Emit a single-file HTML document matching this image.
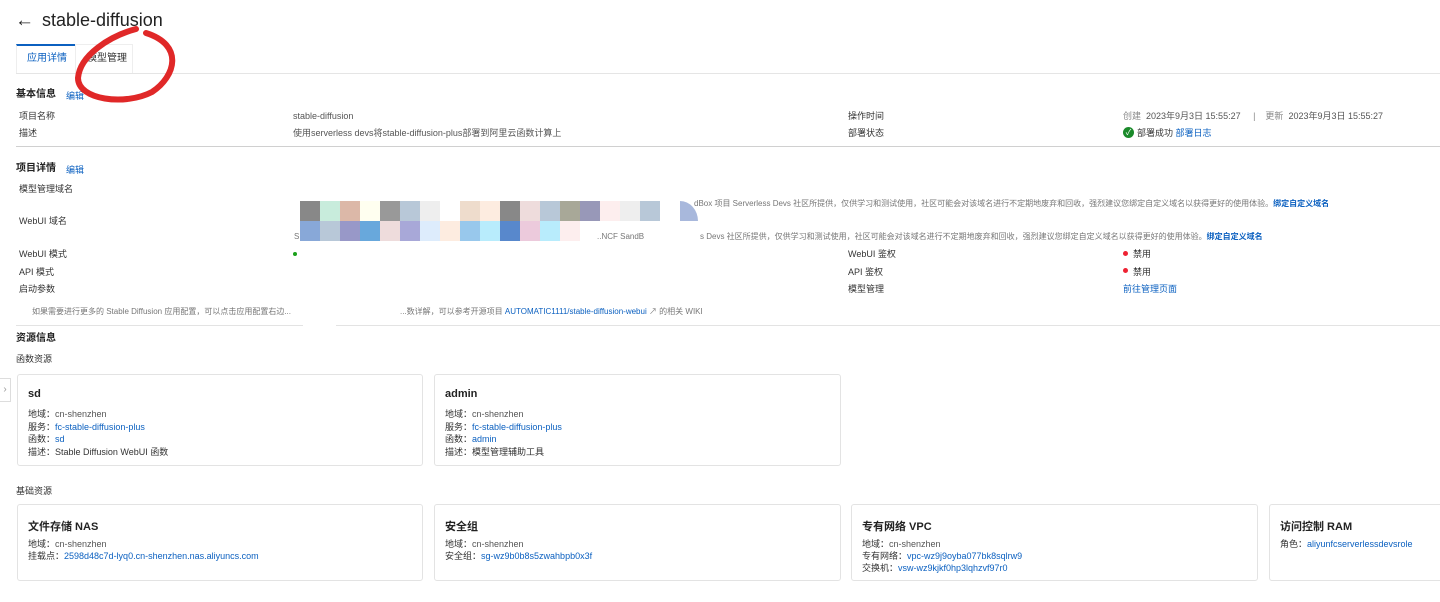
<!DOCTYPE html>
<html><head><meta charset="utf-8">
<style>
*{margin:0;padding:0;box-sizing:border-box}
body{width:1440px;height:602px;background:#fff;font-family:"Liberation Sans","Noto Sans CJK SC",sans-serif;color:#333;font-size:9px;position:relative;overflow:hidden}
.a{position:absolute;white-space:nowrap;line-height:12px}
.b{color:#0b60c0}
.h{font-size:10px;color:#222;font-weight:bold}
.lbl{color:#333}
.g{color:#555}
.card{position:absolute;border:1px solid #e3e3e3;border-radius:3px;background:#fff}
.ct{position:absolute;left:10px;top:13px;font-size:11px;font-weight:bold;color:#222}
.cr{position:absolute;left:10px;font-size:9px;white-space:nowrap}
.m{position:absolute;width:20px;height:20px}
</style></head><body>
<div class="a" style="left:15px;top:10px;font-size:19px;line-height:22px;color:#222">&#8592;</div>
<div class="a" style="left:42px;top:9px;font-size:18px;line-height:22px;color:#222">stable-diffusion</div>
<div style="position:absolute;left:16px;top:44px;width:59px;height:30px;border-top:2px solid #0b60c0;border-left:1px solid #eee"></div>
<div style="position:absolute;left:75px;top:44px;width:58px;height:30px;border:1px solid #eee;border-bottom:none"></div>
<div class="a b" style="left:27px;top:53px;font-size:10px">应用详情</div>
<div class="a" style="left:87px;top:53px;font-size:10px;color:#333">模型管理</div>
<div style="position:absolute;left:16px;top:73px;width:1424px;height:1px;background:#e5e5e5"></div>

<div class="a h" style="left:16px;top:89px">基本信息</div><div class="a b" style="left:66px;top:90px">编辑</div>
<div class="a lbl" style="left:19px;top:110px">项目名称</div><div class="a g" style="left:293px;top:110px">stable-diffusion</div>
<div class="a lbl" style="left:19px;top:127px">描述</div><div class="a g" style="left:293px;top:127px">使用serverless devs将stable-diffusion-plus部署到阿里云函数计算上</div>
<div class="a lbl" style="left:848px;top:110px">操作时间</div><div class="a g" style="left:1123px;top:110px;color:#888">创建 &nbsp;<span style="color:#555">2023年9月3日 15:55:27</span> &nbsp; &nbsp; | &nbsp; &nbsp;更新 &nbsp;<span style="color:#555">2023年9月3日 15:55:27</span></div>
<div class="a lbl" style="left:848px;top:127px">部署状态</div>
<div style="position:absolute;left:1123px;top:127px;width:11px;height:11px;border-radius:50%;background:#1a8a2a;color:#fff;font-size:8px;line-height:11px;text-align:center">✓</div>
<div class="a" style="left:1137px;top:127px">部署成功 <span class="b">部署日志</span></div>
<div style="position:absolute;left:16px;top:146px;width:1424px;height:1px;background:#d0d0d0"></div>

<div class="a h" style="left:16px;top:163px">项目详情</div><div class="a b" style="left:66px;top:164px">编辑</div>
<div class="a lbl" style="left:19px;top:183px">模型管理域名</div>
<div class="a lbl" style="left:19px;top:215px">WebUI 域名</div>
<div class="a lbl" style="left:19px;top:248px">WebUI 模式</div>
<div class="a lbl" style="left:19px;top:266px">API 模式</div>
<div class="a lbl" style="left:19px;top:283px">启动参数</div>
<div style="position:absolute;left:293px;top:252px;width:4px;height:4px;border-radius:50%;background:#1aa01a"></div>
<div class="a g" style="left:694px;top:198px;color:#777;font-size:8px">dBox 项目 Serverless Devs 社区所提供，仅供学习和测试使用，社区可能会对该域名进行不定期地废弃和回收，强烈建议您绑定自定义域名以获得更好的使用体验。<b class="b">绑定自定义域名</b></div>
<div class="a g" style="left:294px;top:231px;color:#777;font-size:8px">S</div>
<div class="a g" style="left:597px;top:231px;color:#777;font-size:8px">..NCF SandB</div>
<div class="a g" style="left:700px;top:231px;color:#777;font-size:8px">s Devs 社区所提供，仅供学习和测试使用，社区可能会对该域名进行不定期地废弃和回收，强烈建议您绑定自定义域名以获得更好的使用体验。<b class="b">绑定自定义域名</b></div>
<div class="a lbl" style="left:848px;top:248px">WebUI 鉴权</div>
<div class="a lbl" style="left:848px;top:266px">API 鉴权</div>
<div class="a lbl" style="left:848px;top:283px">模型管理</div>
<div style="position:absolute;left:1123px;top:251px;width:5px;height:5px;border-radius:50%;background:#e23"></div><div class="a" style="left:1133px;top:248px">禁用</div>
<div style="position:absolute;left:1123px;top:268px;width:5px;height:5px;border-radius:50%;background:#e23"></div><div class="a" style="left:1133px;top:266px">禁用</div>
<div class="a b" style="left:1123px;top:283px">前往管理页面</div>

<div class="m" style="left:300px;top:201px;background:#888"></div><div class="m" style="left:320px;top:201px;background:#c8ecdc"></div><div class="m" style="left:340px;top:201px;background:#dcb8a8"></div><div class="m" style="left:360px;top:201px;background:#fffff0"></div><div class="m" style="left:380px;top:201px;background:#999"></div><div class="m" style="left:400px;top:201px;background:#b8c8d8"></div><div class="m" style="left:420px;top:201px;background:#eee"></div><div class="m" style="left:460px;top:201px;background:#eedccc"></div><div class="m" style="left:480px;top:201px;background:#fdece0"></div><div class="m" style="left:500px;top:201px;background:#888"></div><div class="m" style="left:520px;top:201px;background:#eedcdc"></div><div class="m" style="left:540px;top:201px;background:#b8c8d8"></div><div class="m" style="left:560px;top:201px;background:#a8a898"></div><div class="m" style="left:580px;top:201px;background:#9898b8"></div><div class="m" style="left:600px;top:201px;background:#fdeeee"></div><div class="m" style="left:620px;top:201px;background:#eee"></div><div class="m" style="left:640px;top:201px;background:#b8c8d8"></div>
<div style="position:absolute;left:680px;top:201px;width:18px;height:20px;background:#a8b8dc;border-top-right-radius:18px 20px"></div>
<div class="m" style="left:300px;top:221px;background:#88a8d8"></div><div class="m" style="left:320px;top:221px;background:#b8c8d8"></div><div class="m" style="left:340px;top:221px;background:#9898c8"></div><div class="m" style="left:360px;top:221px;background:#68a8dc"></div><div class="m" style="left:380px;top:221px;background:#eedcdc"></div><div class="m" style="left:400px;top:221px;background:#a8a8d8"></div><div class="m" style="left:420px;top:221px;background:#ddecfc"></div><div class="m" style="left:440px;top:221px;background:#fdece0"></div><div class="m" style="left:460px;top:221px;background:#98c8ec"></div><div class="m" style="left:480px;top:221px;background:#b8ecfc"></div><div class="m" style="left:500px;top:221px;background:#5888cc"></div><div class="m" style="left:520px;top:221px;background:#eccadc"></div><div class="m" style="left:540px;top:221px;background:#b8ecfc"></div><div class="m" style="left:560px;top:221px;background:#fdeeee"></div>

<div class="a" style="left:32px;top:306px;color:#777;font-size:8px">如果需要进行更多的 Stable Diffusion 应用配置，可以点击应用配置右边...</div>
<div class="a" style="left:400px;top:306px;color:#777;font-size:8px">...数详解，可以参考开源项目 <span class="b">AUTOMATIC1111/stable-diffusion-webui</span> ↗ 的相关 WIKI</div>
<div style="position:absolute;left:16px;top:325px;width:287px;height:1px;background:#e3e3e3"></div>
<div style="position:absolute;left:336px;top:325px;width:1104px;height:1px;background:#e3e3e3"></div>

<div class="a h" style="left:16px;top:333px">资源信息</div>
<div class="a" style="left:16px;top:353px">函数资源</div>
<div style="position:absolute;left:0;top:378px;width:11px;height:24px;border:1px solid #ddd;border-left:none;background:#fff;color:#999;font-size:10px;line-height:22px;text-align:center">›</div>
<div class="card" style="left:17px;top:374px;width:406px;height:92px"><div class="ct">sd</div>
<div class="cr" style="top:32px">地域：<span class="g">cn-shenzhen</span></div><div class="cr" style="top:45px">服务：<span class="b">fc-stable-diffusion-plus</span></div><div class="cr" style="top:57px">函数：<span class="b">sd</span></div><div class="cr" style="top:70px">描述：Stable Diffusion WebUI 函数</div></div>
<div class="card" style="left:434px;top:374px;width:407px;height:92px"><div class="ct">admin</div>
<div class="cr" style="top:32px">地域：<span class="g">cn-shenzhen</span></div><div class="cr" style="top:45px">服务：<span class="b">fc-stable-diffusion-plus</span></div><div class="cr" style="top:57px">函数：<span class="b">admin</span></div><div class="cr" style="top:70px">描述：模型管理辅助工具</div></div>

<div class="a" style="left:16px;top:485px">基础资源</div>
<div class="card" style="left:17px;top:504px;width:406px;height:77px"><div class="ct">文件存储 NAS</div>
<div class="cr" style="top:32px">地域：<span class="g">cn-shenzhen</span></div><div class="cr" style="top:44px">挂载点：<span class="b">2598d48c7d-lyq0.cn-shenzhen.nas.aliyuncs.com</span></div></div>
<div class="card" style="left:434px;top:504px;width:407px;height:77px"><div class="ct">安全组</div>
<div class="cr" style="top:32px">地域：<span class="g">cn-shenzhen</span></div><div class="cr" style="top:44px">安全组：<span class="b">sg-wz9b0b8s5zwahbpb0x3f</span></div></div>
<div class="card" style="left:851px;top:504px;width:407px;height:77px"><div class="ct">专有网络 VPC</div>
<div class="cr" style="top:32px">地域：<span class="g">cn-shenzhen</span></div><div class="cr" style="top:44px">专有网络：<span class="b">vpc-wz9j9oyba077bk8sqlrw9</span></div><div class="cr" style="top:56px">交换机：<span class="b">vsw-wz9kjkf0hp3lqhzvf97r0</span></div></div>
<div class="card" style="left:1269px;top:504px;width:180px;height:77px"><div class="ct">访问控制 RAM</div>
<div class="cr" style="top:32px">角色：<span class="b">aliyunfcserverlessdevsrole</span></div></div>

<svg style="position:absolute;left:0;top:0" width="300" height="120"><path d="M136 29 C110 36 80 55 78 78 C78 100 125 106 152 92 C176 76 184 45 146 33" fill="none" stroke="#e02828" stroke-width="6" stroke-linecap="round"/></svg>
</body></html>
